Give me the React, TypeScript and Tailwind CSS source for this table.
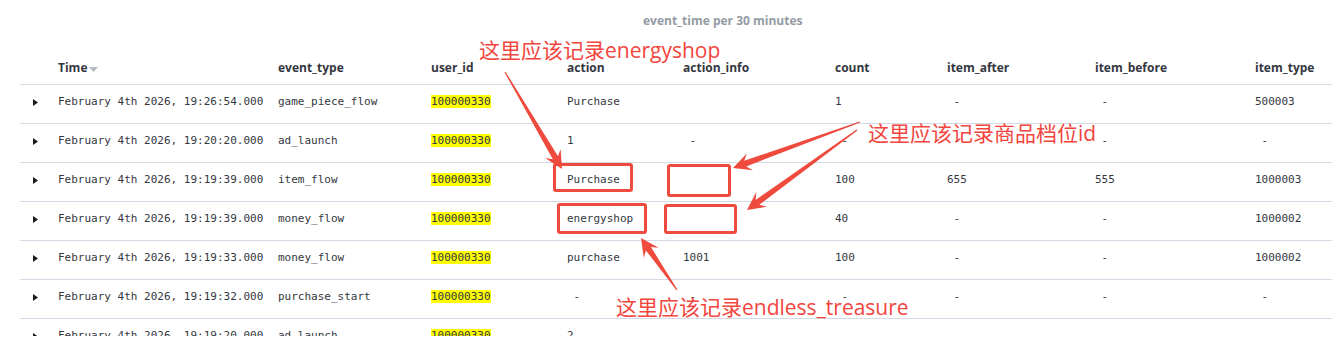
const columns = ['Time', 'event_type', 'user_id', 'action', 'action_info', 'count', 'item_after', 'item_before', 'item_type'];

// null = empty cell, '-' = kibana's empty-value dash
const rows: (string | null)[][] = [
  ['February 4th 2026, 19:26:54.000', 'game_piece_flow', '100000330', 'Purchase', null, '1', '-', '-', '500003'],
  ['February 4th 2026, 19:20:20.000', 'ad_launch', '100000330', '1', '-', '-', '-', '-', '-'],
  ['February 4th 2026, 19:19:39.000', 'item_flow', '100000330', 'Purchase', null, '100', '655', '555', '1000003'],
  ['February 4th 2026, 19:19:39.000', 'money_flow', '100000330', 'energyshop', null, '40', '-', '-', '1000002'],
  ['February 4th 2026, 19:19:33.000', 'money_flow', '100000330', 'purchase', '1001', '100', '-', '-', '1000002'],
  ['February 4th 2026, 19:19:32.000', 'purchase_start', '100000330', '-', '-', '-', '-', '-', '-'],
  ['February 4th 2026, 19:19:20.000', 'ad_launch', '100000330', '2', '-', '-', '-', '-', '-'],
];

const grid = 'grid grid-cols-[38px_220px_153px_136px_116px_152px_112px_148px_160px_1fr] items-start';

// tapered annotation arrow, tail -> tip
function arrowPoints(x1: number, y1: number, x2: number, y2: number) {
  const len = Math.hypot(x2 - x1, y2 - y1);
  const dx = (x2 - x1) / len;
  const dy = (y2 - y1) / len;
  const nx = -dy;
  const ny = dx;
  const headLen = 18;
  const bx = x2 - dx * headLen;
  const by = y2 - dy * headLen;
  const kx = x2 - dx * (headLen - 5);
  const ky = y2 - dy * (headLen - 5);
  const p = (x: number, y: number) => `${x.toFixed(1)},${y.toFixed(1)}`;
  return [
    p(x1 + nx * 0.6, y1 + ny * 0.6),
    p(kx + nx * 3, ky + ny * 3),
    p(bx + nx * 9, by + ny * 9),
    p(x2, y2),
    p(bx - nx * 9, by - ny * 9),
    p(kx - nx * 3, ky - ny * 3),
    p(x1 - nx * 0.6, y1 - ny * 0.6),
  ].join(' ');
}

const arrows = [
  [505, 72, 562, 169],
  [860, 122, 733, 168],
  [857, 130, 747, 210],
  [677, 290, 641, 238],
];

function Cell({ value, col }: { value: string | null; col: number }) {
  if (value === null) return <div />;
  if (value === '-') return <div className="whitespace-pre">{' - '}</div>;
  if (col === 2) {
    return (
      <div>
        <span className="bg-[#ffff00]">{value}</span>
      </div>
    );
  }
  return <div className="whitespace-nowrap">{value}</div>;
}

const note = "absolute leading-[26px] text-[21px] text-[#f2453d] whitespace-nowrap font-['Open_Sans','Noto_Sans_CJK_SC',sans-serif]";
const box = 'absolute border-[3px] border-[#ee4a3e] rounded-[3px]';

export default function App() {
  return (
    <div className="relative w-[1332px] h-[355px] overflow-hidden bg-white">
      <div className="h-[336px] overflow-hidden">
        <div className="h-[42px] flex items-center pl-[643px] font-['Open_Sans',sans-serif] font-bold text-[12px] text-[#939ba5]">
          event_time per 30 minutes
        </div>

        <div className="ml-[20px]">
          <div className={`${grid} h-[43px] border-b border-[#d3dae6] pt-[18px] leading-[16px] font-['Open_Sans',sans-serif] font-bold text-[12px] text-[#343741]`}>
            <div />
            {columns.map((c, i) => (
              <div key={c} className="flex items-center h-[16px] whitespace-nowrap">
                {c}
                {i === 0 && (
                  <svg width="9" height="5" viewBox="0 0 9 5" className="ml-[2px] mt-[2px]">
                    <polygon points="0,0 9,0 4.5,5" fill="#b4bcc6" />
                  </svg>
                )}
              </div>
            ))}
          </div>

          {rows.map((row, r) => (
            <div
              key={r}
              className={`${grid} h-[39px] border-b border-[#d3dae6] pt-[9px] leading-[16px] font-['DejaVu_Sans_Mono',monospace] text-[11px] text-[#343741]`}
            >
              <div className="flex items-center pl-[13px] h-[16px]">
                <svg width="5" height="7" viewBox="0 0 5 7">
                  <polygon points="0,0 5,3.5 0,7" fill="#1a1c21" />
                </svg>
              </div>
              {row.map((v, i) => (
                <Cell key={i} value={v} col={i} />
              ))}
            </div>
          ))}
        </div>
      </div>

      {/* annotation boxes */}
      <div className={`${box} left-[553px] top-[163px] w-[80px] h-[29px]`} />
      <div className={`${box} left-[667px] top-[164px] w-[64px] h-[33px]`} />
      <div className={`${box} left-[557px] top-[203px] w-[90px] h-[31px]`} />
      <div className={`${box} left-[664px] top-[204px] w-[73px] h-[30px]`} />

      <svg className="absolute inset-0 pointer-events-none" width="1332" height="355" viewBox="0 0 1332 355">
        {arrows.map(([a, b, c, d], i) => (
          <polygon key={i} points={arrowPoints(a, b, c, d)} fill="#ee4a3e" />
        ))}
      </svg>

      {/* annotation notes */}
      <div className={`${note} left-[479px] top-[37px]`}>这里应该记录energyshop</div>
      <div className={`${note} left-[868px] top-[120px]`}>这里应该记录商品档位id</div>
      <div className={`${note} left-[616px] top-[294px]`}>这里应该记录endless_treasure</div>
    </div>
  );
}
